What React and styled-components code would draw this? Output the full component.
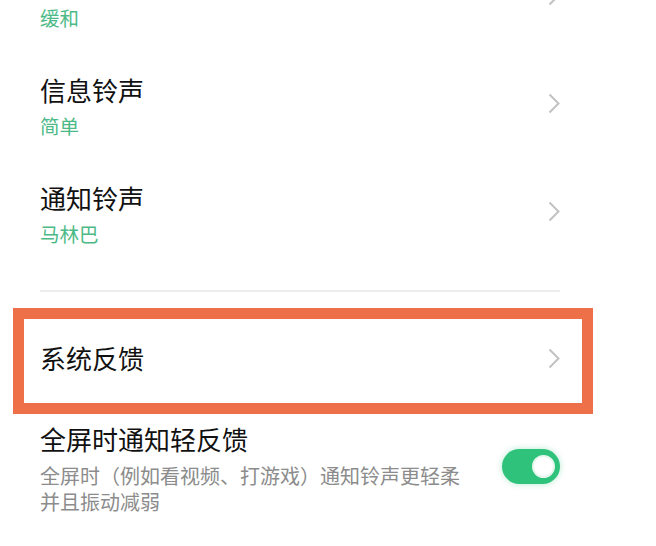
import React from 'react';
import styled, { createGlobalStyle } from 'styled-components';

const GlobalStyle = createGlobalStyle`
    html, body {
        margin: 0;
        padding: 0;
        background: #ffffff;
    }

    body {
        font-family: "Noto Sans CJK SC", "Noto Sans", sans-serif;
    }
`;

const Page = styled.div`
    display: flex;
    flex-direction: column;
    width: 656px;
    height: 546px;
    padding: 0 96px 0 40px;
    box-sizing: border-box;
    background: #ffffff;
    overflow: hidden;
`;

const List = styled.div`
    margin-top: -56px;
`;

const Row = styled.div`
    display: flex;
    align-items: center;
    justify-content: space-between;
    height: ${(p) => p.height || 108}px;
`;

const TextBlock = styled.div`
    display: flex;
    flex-direction: column;
`;

const Title = styled.div`
    font-size: 26px;
    line-height: 34px;
    color: #111111;
`;

const Value = styled.div`
    margin-top: 5px;
    font-size: 19.5px;
    line-height: 28px;
    color: #4cba86;
`;

const Description = styled.div`
    margin-top: 7px;
    max-width: 430px;
    font-size: 20px;
    line-height: 26px;
    color: #8c8c8c;
`;

const Chevron = styled.svg`
    flex: none;
    width: 12px;
    height: 21px;
    margin-bottom: ${(p) => p.lift || 0}px;
`;

const Divider = styled.div`
    flex: none;
    height: 2px;
    margin-top: 22px;
    background: #ececec;
`;

const Highlight = styled.div`
    flex: none;
    margin: 16px -33px 0 -27px;
    border: 11px solid #ee7049;
    padding: 0 22px 6px 16px;
`;

const SwitchRow = styled.div`
    display: flex;
    align-items: flex-start;
    justify-content: space-between;
    margin-top: 8px;
`;

const Toggle = styled.div`
    flex: none;
    display: flex;
    align-items: center;
    justify-content: flex-end;
    width: 58px;
    height: 35px;
    margin-top: 27px;
    padding-right: 5px;
    box-sizing: border-box;
    border-radius: 18px;
    background: #2fc27b;
    box-shadow: 0 0 6px rgba(47, 194, 123, 0.35);
`;

const Knob = styled.div`
    width: 19px;
    height: 19px;
    border-radius: 50%;
    background: #ffffff;
    border: 2px solid #e6f7ee;
`;

const Arrow = ({ lift }) => (
    <Chevron viewBox="0 0 12 21" lift={lift}>
        <polyline points="1.5,1.5 10.5,10.5 1.5,19.5" fill="none" stroke="#c2c2c2" strokeWidth="2" />
    </Chevron>
);

const ringtones = [
    { title: '', value: '缓和' },
    { title: '信息铃声', value: '简单' },
    { title: '通知铃声', value: '马林巴' },
];

function App() {
    return (
        <Page>
            <GlobalStyle />
            <List>
                {ringtones.map((item, idx) => (
                    <Row key={idx}>
                        <TextBlock>
                            <Title>{item.title || '\u00a0'}</Title>
                            <Value>{item.value}</Value>
                        </TextBlock>
                        <Arrow lift={6} />
                    </Row>
                ))}
            </List>
            <Divider />
            <Highlight>
                <Row height={78}>
                    <Title>系统反馈</Title>
                    <Arrow lift={0} />
                </Row>
            </Highlight>
            <SwitchRow>
                <TextBlock>
                    <Title>全屏时通知轻反馈</Title>
                    <Description>全屏时（例如看视频、打游戏）通知铃声更轻柔并且振动减弱</Description>
                </TextBlock>
                <Toggle>
                    <Knob />
                </Toggle>
            </SwitchRow>
        </Page>
    );
}

export default App;
